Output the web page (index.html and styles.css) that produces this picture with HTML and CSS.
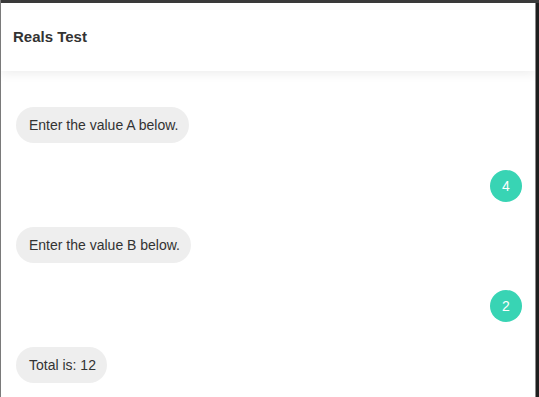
FILE: index.html
```html
<!DOCTYPE html>
<html lang="en">
<head>
    <meta charset="UTF-8">
    <meta name="viewport" content="width=device-width, initial-scale=1.0">
    <title>Reals Test</title>
    <link rel="stylesheet" href="styles.css">
</head>
<body>
    <div class="frame">
        <div class="app">
            <header class="app-header">
                <h1>Reals Test</h1>
            </header>

            <div class="chat">
                <div class="msg bot">Enter the value A below.</div>
                <div class="msg user">4</div>
                <div class="msg bot">Enter the value B below.</div>
                <div class="msg user">2</div>
                <div class="msg bot">Total is: 12</div>
            </div>
        </div>
        <div class="side-strip"></div>
    </div>
</body>
</html>
```

FILE: styles.css
```css
html, body {
    margin: 0;
    padding: 0;
    height: 100%;
}

body {
    font-family: "Liberation Sans", Arial, sans-serif;
    background: #3a3a3a;
    overflow: hidden;
}

.frame {
    display: flex;
    height: 100%;
    padding-top: 3px;
    box-sizing: border-box;
    border-left: 1px solid #7a7a7a;
}

.app {
    flex: 1;
    background: #ffffff;
    display: flex;
    flex-direction: column;
    overflow: hidden;
}

.side-strip {
    width: 3px;
    border-left: 1px solid #8a8a8a;
    background: #1e1e1e;
}

.app-header {
    height: 68px;
    display: flex;
    align-items: center;
    padding: 0 12px;
    background: #ffffff;
    box-shadow: 0 3px 10px rgba(0, 0, 0, 0.07);
    position: relative;
    z-index: 1;
}

.app-header h1 {
    margin: 0;
    margin-top: -1px;
    font-size: 15px;
    font-weight: bold;
    color: #333333;
}

.chat {
    display: flex;
    flex-direction: column;
    gap: 25px;
    padding: 36px 13px 0 15px;
}

.msg {
    font-size: 14px;
    color: #333333;
}

.msg.bot {
    align-self: flex-start;
    background: #eeeeee;
    height: 36px;
    line-height: 36px;
    padding: 0 11px 0 13px;
    border-radius: 18px;
}

.msg.user {
    align-self: flex-end;
    width: 32px;
    height: 32px;
    line-height: 32px;
    margin-top: 2px;
    border-radius: 50%;
    background: #38d4b4;
    color: #ffffff;
    text-align: center;
}
```
